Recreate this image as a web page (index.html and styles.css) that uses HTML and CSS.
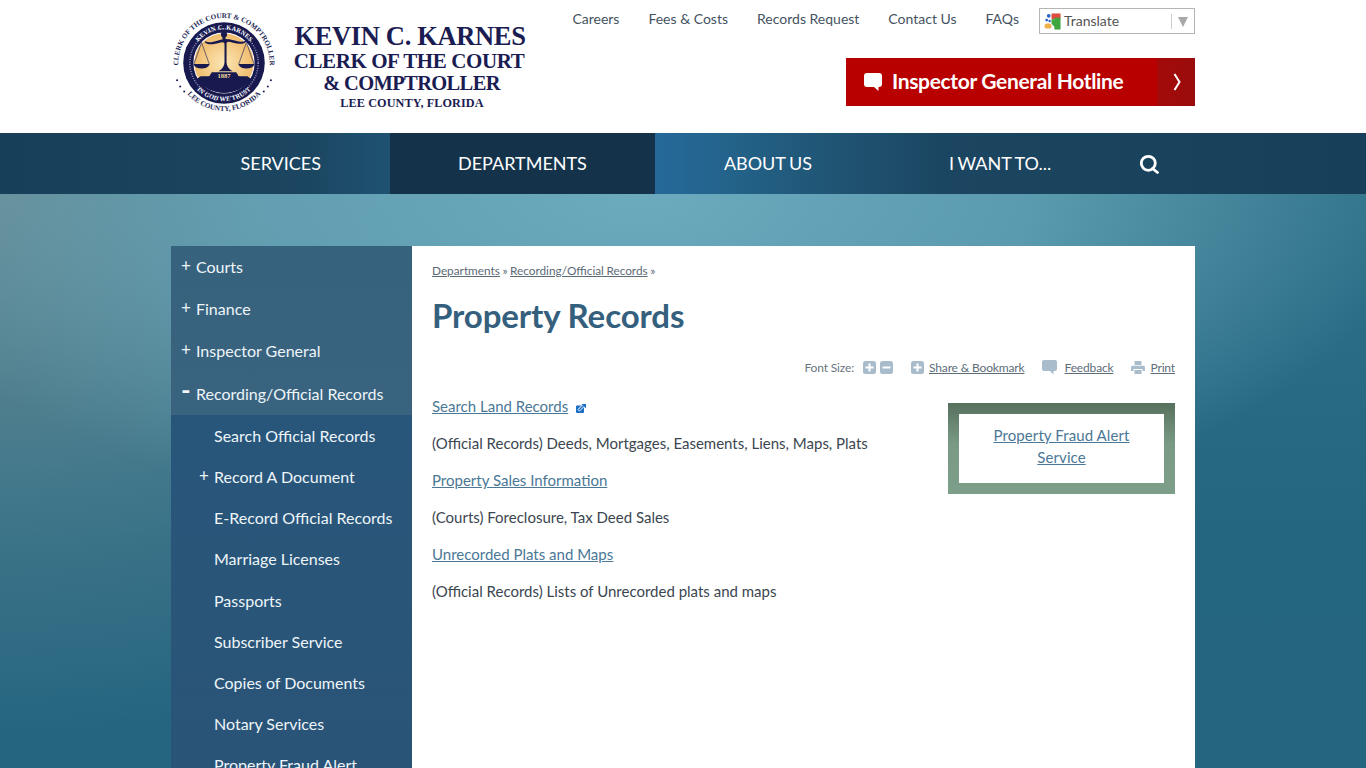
FILE: index.html
```html
<!DOCTYPE html>
<html lang="en">
<head>
<meta charset="utf-8">
<title>Property Records | Lee County Clerk of Court</title>
<link rel="stylesheet" href="styles.css">
</head>
<body>
<header class="header">
  <div class="wrap header-inner">
    <a class="logo" href="#">
      <svg class="seal" viewBox="2 2 100 102" aria-hidden="true">
        <defs>
          <path id="arcTop" d="M7.800 60a44.800 44.800 0 1 1 88.400 0"/>
          <path id="arcBot" d="M14 80a47.500 47.500 0 0 0 76 0"/>
          <path id="ringTop" d="M22 62a32 32 0 1 1 60 0"/>
          <path id="ringBot" d="M21 73a37.500 37.500 0 0 0 62 0"/>
          <radialGradient id="gold"><stop offset="0" stop-color="#fce6b6"/><stop offset="1" stop-color="#efbb6b"/></radialGradient>
        </defs>
        <circle cx="52" cy="52" r="40" fill="#17194f"/>
        <circle cx="52" cy="52" r="29.500" fill="url(#gold)" stroke="#fff" stroke-width="1"/>
        <circle cx="52" cy="52" r="33.500" fill="none" stroke="#8d90b5" stroke-width="1.600" stroke-dasharray="1 1.400"/>
        <path class="seal-ink" d="M25 68a34 34 0 0 0 54 0l-4-3H29z"/>
        <text class="seal-outer"><textPath href="#arcTop" startOffset="50%" text-anchor="middle">CLERK OF THE COURT &amp; COMPTROLLER</textPath></text>
        <text class="seal-outer"><textPath href="#arcBot" startOffset="50%" text-anchor="middle">LEE COUNTY, FLORIDA</textPath></text>
        <text class="seal-ring"><textPath href="#ringTop" startOffset="50%" text-anchor="middle">KEVIN C. KARNES</textPath></text>
        <text class="seal-ring"><textPath href="#ringBot" startOffset="50%" text-anchor="middle">IN GOD WE TRUST</textPath></text>
        <path class="seal-ink" d="M50.500 26h3v2.500c5 .2 9 1.600 13 2.400 3 .6 5 .2 7-.8l.5 1c-2.500 1.800-5 2.400-8 2-3.500-.5-7-1.800-10-2-1 .2-1.500 1-1.500 2v18c0 4 2 7 6 9H46.500c4-2 6-5 6-9V33.600c0-1-.5-1.800-1.500-2-3 .2-6.500 1.500-10 2-3 .4-5.500-.2-8-2l.5-1c2 1 4 1.400 7 .8 4-.8 8-2.200 10-2.400z"/>
        <circle class="seal-ink" cx="52" cy="24" r="3"/>
        <path class="seal-ink" d="M37 66l3-5h24l3 5z"/>
        <path class="seal-ink" d="M22 53h16c-1 3-4 4.500-8 4.500s-7-1.500-8-4.500zM66 53h16c-1 3-4 4.500-8 4.500s-7-1.500-8-4.500z"/>
        <path class="seal-thin" d="M30 32l-7.500 21M30 32l7.500 21M74 32l-7.500 21M74 32l7.500 21"/>
        <text class="seal-year" x="52" y="66.500">1887</text>
        <g class="seal-dots"><circle cx="6" cy="69" r="1"/><circle cx="9" cy="75" r="1"/><circle cx="13" cy="80" r="1"/><circle cx="98" cy="69" r="1"/><circle cx="95" cy="75" r="1"/><circle cx="91" cy="80" r="1"/></g>
      </svg>
      <span class="logo-text">
        <span class="logo-l1">KEVIN C. KARNES</span>
        <span class="logo-l2">CLERK OF THE COURT</span>
        <span class="logo-l3">&amp; COMPTROLLER</span>
        <span class="logo-l4">LEE COUNTY, FLORIDA</span>
      </span>
    </a>
    <div class="header-right">
      <div class="util">
        <nav class="util-links">
          <a href="#">Careers</a>
          <a href="#">Fees &amp; Costs</a>
          <a href="#">Records Request</a>
          <a href="#">Contact Us</a>
          <a href="#">FAQs</a>
        </nav>
        <div class="translate">
          <svg class="g-icon" viewBox="0 0 18 18" aria-hidden="true">
            <rect x="8" y="0.500" width="9.500" height="6" fill="#dd4b3e"/>
            <rect x="11" y="5" width="6.500" height="12.500" fill="#3fa63f"/>
            <path d="M8 6.500h6v5l-3 3-3-3z" fill="#3fa63f"/>
            <circle cx="5" cy="3" r="2" fill="#2a62c8"/>
            <circle cx="2.800" cy="7.500" r="1.500" fill="#2a62c8"/>
            <circle cx="6" cy="8.500" r="1.300" fill="#2a62c8"/>
            <rect x="0.500" y="11" width="7.500" height="5.500" rx="2.700" fill="#f0b04a"/>
          </svg>
          <span class="translate-label">Translate</span>
          <span class="translate-sep"></span>
          <span class="translate-arrow"></span>
        </div>
      </div>
      <a class="hotline" href="#">
        <svg class="hotline-icon" viewBox="0 0 18 18" aria-hidden="true"><path d="M3 0h12a3 3 0 0 1 3 3v8a3 3 0 0 1-3 3h-.5v4l-4.500-4H3a3 3 0 0 1-3-3V3a3 3 0 0 1 3-3z" fill="#fff"/></svg>
        <span class="hotline-text">Inspector General Hotline</span>
        <span class="hotline-arrow"><svg viewBox="0 0 8 18" aria-hidden="true"><path d="M1.500 1l5 8-5 8" fill="none" stroke="#fff" stroke-width="2"/></svg></span>
      </a>
    </div>
  </div>
</header>

<nav class="mainnav">
  <div class="wrap mainnav-inner">
    <a class="nav-item" href="#">SERVICES</a>
    <a class="nav-item nav-active" href="#">DEPARTMENTS</a>
    <a class="nav-item" href="#">ABOUT US</a>
    <a class="nav-item" href="#">I WANT TO...</a>
    <a class="nav-search" href="#" aria-label="Search">
      <svg viewBox="0 0 20 20" aria-hidden="true"><circle cx="9.300" cy="9.300" r="7" fill="none" stroke="#fff" stroke-width="2.800"/><path d="M13.500 14.500l5 4" stroke="#fff" stroke-width="2.800" stroke-linecap="round"/></svg>
    </a>
  </div>
</nav>

<main class="wrap page">
  <aside class="sidenav">
    <ul class="side-top">
      <li><span class="sign">+</span><a href="#">Courts</a></li>
      <li><span class="sign">+</span><a href="#">Finance</a></li>
      <li><span class="sign">+</span><a href="#">Inspector General</a></li>
      <li class="side-open"><span class="sign sign-minus">-</span><a href="#">Recording/Official Records</a></li>
    </ul>
    <ul class="side-sub">
      <li><a href="#">Search Official Records</a></li>
      <li><span class="sign">+</span><a href="#">Record A Document</a></li>
      <li><a href="#">E-Record Official Records</a></li>
      <li><a href="#">Marriage Licenses</a></li>
      <li><a href="#">Passports</a></li>
      <li><a href="#">Subscriber Service</a></li>
      <li><a href="#">Copies of Documents</a></li>
      <li><a href="#">Notary Services</a></li>
      <li><a href="#">Property Fraud Alert</a></li>
    </ul>
  </aside>
  <article class="content">
    <div class="crumbs"><a href="#">Departments</a> » <a href="#">Recording/Official Records</a> »</div>
    <h1 class="title">Property Records</h1>
    <div class="tools">
      <span class="tool-label">Font Size:</span>
      <span class="tool-pair">
        <svg class="tool-icon" viewBox="0 0 13 13" aria-hidden="true"><rect width="13" height="13" rx="2.500" fill="#a9bccb"/><path d="M2.500 6.500h8M6.500 2.500v8" stroke="#fff" stroke-width="2"/></svg>
        <svg class="tool-icon" viewBox="0 0 13 13" aria-hidden="true"><rect width="13" height="13" rx="2.500" fill="#a9bccb"/><path d="M2.500 6.500h8" stroke="#fff" stroke-width="2"/></svg>
      </span>
      <span class="tool-link tool-share">
        <svg class="tool-icon" viewBox="0 0 13 13" aria-hidden="true"><rect width="13" height="13" rx="2.500" fill="#a9bccb"/><path d="M2.500 6.500h8M6.500 2.500v8" stroke="#fff" stroke-width="2"/></svg>
        <a href="#">Share &amp; Bookmark</a>
      </span>
      <span class="tool-link tool-feedback">
        <svg class="tool-bubble" viewBox="0 0 15 15" aria-hidden="true"><path d="M2 0h11a2 2 0 0 1 2 2v7a2 2 0 0 1-2 2h-1.500v3.500L8 11H2a2 2 0 0 1-2-2V2a2 2 0 0 1 2-2z" fill="#a9bccb"/></svg>
        <a href="#">Feedback</a>
      </span>
      <span class="tool-link tool-print">
        <svg class="tool-print-icon" viewBox="0 0 14 13" aria-hidden="true"><path d="M3.500 0h7v4h-7z" fill="#a9bccb"/><path d="M1.500 4.800h11a1.500 1.500 0 0 1 1.500 1.500v3.700h-2.500V8h-9v2H0V6.300a1.500 1.500 0 0 1 1.500-1.500z" fill="#a9bccb"/><path d="M3.500 9h7v4h-7z" fill="#a9bccb"/></svg>
        <a href="#">Print</a>
      </span>
    </div>
    <div class="body-row">
      <div class="body-text">
        <p><a href="#">Search Land Records</a><svg class="ext" viewBox="0 0 10 9" aria-hidden="true"><rect y="1.500" width="8" height="7.500" rx="1" fill="#1a6fc4"/><path d="M2.500 6.500L7.500 1.500" stroke="#fff" stroke-width="3"/><path d="M2.800 6.200L7.500 1.500" stroke="#1a6fc4" stroke-width="1.500"/><path d="M5.500 0H10v4.500z" fill="#1a6fc4"/></svg></p>
        <p>(Official Records) Deeds, Mortgages, Easements, Liens, Maps, Plats</p>
        <p><a href="#">Property Sales Information</a></p>
        <p>(Courts) Foreclosure, Tax Deed Sales</p>
        <p><a href="#">Unrecorded Plats and Maps</a></p>
        <p>(Official Records) Lists of Unrecorded plats and maps</p>
      </div>
      <div class="callout"><div class="callout-inner"><a href="#">Property Fraud Alert Service</a></div></div>
    </div>
  </article>
</main>
</body>
</html>
```
FILE: styles.css
```css
* { box-sizing: border-box; }
html, body { margin: 0; padding: 0; height: 768px; overflow: hidden; }
body {
  font-family: Lato, "Open Sans", sans-serif;
  color: #3b4650;
  background-color: #256681;
  background-image:
    radial-gradient(ellipse 780px 350px at 640px 194px, rgba(108,170,190,1) 0%, rgba(102,165,185,.8) 50%, rgba(90,150,170,0) 100%),
    radial-gradient(ellipse 780px 540px at 0 194px, rgba(108,140,147,.95) 0%, rgba(100,140,150,.45) 55%, rgba(100,140,150,0) 100%),
    linear-gradient(to bottom, #2f7188 194px, #286a84 400px, #246580 540px, #266580 768px);
}
ul { list-style: none; margin: 0; padding: 0; }
a { color: inherit; }
.wrap { width: 1024px; margin: 0 auto; }

/* header */
.header { height: 133px; background: #fff; }
.header-inner { display: flex; justify-content: space-between; height: 133px; }
.logo { display: flex; text-decoration: none; padding: 12px 0 0 2px; }
.seal { width: 102px; height: 104px; flex: none; }
.seal-outer { font: 700 7px "Liberation Serif", serif; fill: #1d1f55; }
.seal-ring { font: 700 6.200px "Liberation Serif", serif; fill: #fff; letter-spacing: .2px; }
.seal-ink { fill: #17194f; }
.seal-thin { fill: none; stroke: #17194f; stroke-width: .6; }
.seal-year { font: 700 6.500px "Liberation Serif", serif; fill: #f5d89a; text-anchor: middle; }
.seal-dots { fill: #1d1f55; }
.logo-text { display: flex; flex-direction: column; align-items: center; width: 232px; margin: 9px 0 0 19px; font-family: "Liberation Serif", serif; font-weight: 700; color: #1a1c52; white-space: nowrap; }
.logo-l1 { font-size: 26.500px; line-height: 30px; letter-spacing: -.35px; }
.logo-l2 { font-size: 21px; line-height: 21px; letter-spacing: -.4px; margin-left: -2px; }
.logo-l3 { font-size: 20.500px; line-height: 22px; letter-spacing: -.65px; margin-left: 3px; }
.logo-l4 { font-size: 12.200px; line-height: 18px; letter-spacing: .1px; margin-left: 4px; }

.header-right { display: flex; flex-direction: column; align-items: flex-end; width: 624px; }
.util { display: flex; align-items: flex-start; margin-top: 8px; }
.util-links { display: flex; gap: 29px; font-size: 14px; line-height: 22px; color: #44535f; margin-right: 20px; }
.util-links a { text-decoration: none; }
.translate { display: flex; align-items: center; width: 156px; height: 26px; border: 1px solid #b5b5b5; padding-left: 4px; color: #555; font-size: 14px; }
.g-icon { width: 17px; height: 17px; flex: none; }
.translate-label { margin-left: 3px; flex: 1; padding-bottom: 2px; }
.translate-sep { width: 1px; height: 15px; background: #ccc; }
.translate-arrow { width: 0; height: 0; margin: 1px 6px 0 6px; border-left: 5px solid transparent; border-right: 5px solid transparent; border-top: 10px solid #a8a8a8; }

.hotline { display: flex; align-items: center; width: 349px; height: 48px; margin-top: 24px; padding-left: 18px; background: #b90000; color: #fff; text-decoration: none; }
.hotline-icon { width: 18px; height: 18px; flex: none; margin-right: 10px; }
.hotline-text { flex: 1; font-size: 21px; font-weight: 700; letter-spacing: -.34px; padding-bottom: 3px; }
.hotline-arrow { display: flex; align-items: center; justify-content: center; width: 38px; height: 48px; padding-left: 2px; background: linear-gradient(to right, #a40a0a, #9a0c0c); }
.hotline-arrow svg { width: 8px; height: 18px; }

/* main nav */
.mainnav { height: 61px; background: linear-gradient(to right, #183f59 0, #1b4560 300px, #1f5272 390px, #25699a 655px, #24648c 720px, #1f5270 850px, #1b4560 950px, #183f59 1366px); }
.mainnav-inner { display: flex; height: 61px; padding-left: 1px; }
.nav-item { display: flex; align-items: center; padding: 0 68.500px 2px; font-size: 18px; color: #fff; text-decoration: none; word-spacing: -1px; }
.nav-active { background: #14334a; }
.nav-search { display: flex; align-items: center; margin-left: 19px; padding-top: 1px; }
.nav-search svg { width: 20px; height: 20px; }

/* page */
.page { display: flex; align-items: flex-start; padding-top: 52px; }
.sidenav { width: 241px; flex: none; font-size: 16px; color: #eef5f9; }
.sidenav a { text-decoration: none; }
.side-top { background: linear-gradient(to bottom, #37627e, #39637f); }
.side-top li { display: flex; align-items: center; height: 42px; padding: 0 0 .8px 25px; position: relative; }
.side-top .side-open { height: 43px; padding: .7px 0 0 25px; }
.side-sub { background: linear-gradient(to bottom, #28567a, #2a5477); }
.side-sub li { display: flex; align-items: center; height: 41.150px; padding-left: 43px; position: relative; }
.sign { position: absolute; left: 10px; top: 10px; font-size: 17px; line-height: 20px; }
.side-sub .sign { left: 28px; top: 10px; }
.side-top .sign-minus { left: 10px; font-size: 26px; font-weight: 700; top: 8px; }

.content { width: 783px; height: 522px; background: #fff; padding: 18px 20px 0; }
.crumbs { font-size: 11.800px; line-height: 14px; color: #5b6a76; word-spacing: -.5px; }
.title { margin: 15px 0 0; font-size: 33px; line-height: 44px; font-weight: 700; color: #34607e; letter-spacing: -.1px; }
.tools { display: flex; justify-content: flex-end; align-items: center; height: 18px; margin-top: 21px; font-size: 12px; color: #6a7680; letter-spacing: -.15px; }
.tool-label { margin-right: 9px; }
.tool-pair { display: flex; gap: 4px; margin-right: 18px; }
.tool-icon { width: 13px; height: 13px; display: block; flex: none; }
.tool-link { display: flex; align-items: center; }
.tool-link a { color: #5d6d7a; }
.tool-share svg { margin-right: 5px; }
.tool-feedback { margin-left: 17px; }
.tool-bubble { width: 15px; height: 15px; margin-right: 8px; }
.tool-print { margin-left: 18px; }
.tool-print-icon { width: 14px; height: 13px; margin-right: 5px; }

.body-row { display: flex; justify-content: space-between; margin-top: 19px; }
.body-text { font-size: 15px; line-height: 22px; color: #3b4650; }
.body-text p { margin: 0 0 15px; }
.body-text a, .callout a { color: #4a7896; }
.ext { width: 10px; height: 9px; margin-left: 8px; vertical-align: -1px; }
.callout { width: 227px; height: 91px; margin-top: 8px; padding: 11px; background: linear-gradient(to bottom, #56715d 0, #7a9a86 45%, #7d9e88 100%); }
.callout-inner { height: 69px; background: #fff; padding: 10px 20px 0; text-align: center; font-size: 15px; line-height: 22px; letter-spacing: .1px; }
```
